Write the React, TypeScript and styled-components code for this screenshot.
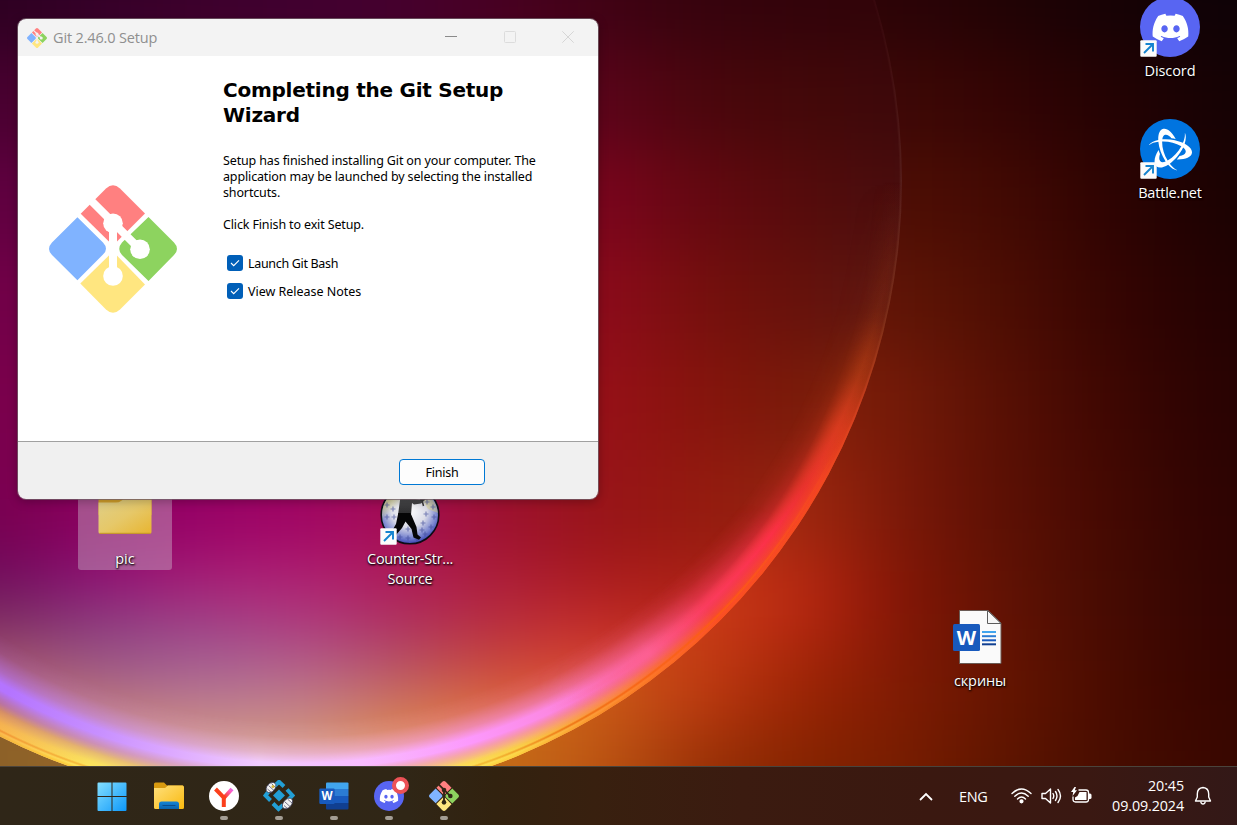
import React from 'react';
import styled, { createGlobalStyle } from 'styled-components';
import { FaDiscord } from 'react-icons/fa';
import { SiBattledotnet } from 'react-icons/si';

const GlobalStyle = createGlobalStyle`
  * { box-sizing: border-box; }
  body { margin: 0; overflow: hidden; background: #200; }
`;

const uiFont = `"Open Sans", "Noto Sans", sans-serif`;
const dialogFont = `"Noto Sans", "Open Sans", sans-serif`;

const Screen = styled.div`
  width: 1237px;
  height: 825px;
  display: flex;
  flex-direction: column;
  font-family: ${uiFont};
  overflow: hidden;
`;

const Desktop = styled.main`
  position: relative;
  flex: 1;
  overflow: hidden;
`;

/* ---------- wallpaper ---------- */

const Canvas = styled.svg`
  position: absolute;
  inset: 0;
  display: block;
`;

const Ring = styled.div<{ $colors: string; $mask: string; $cx: number; $cy: number }>`
  position: absolute;
  inset: 0;
  clip-path: circle(622px at 280px 181px);
  background: conic-gradient(from 90deg at 280px 181px, ${p => p.$colors});
  -webkit-mask-image: radial-gradient(circle at ${p => p.$cx}px ${p => p.$cy}px, ${p => p.$mask});
  mask-image: radial-gradient(circle at ${p => p.$cx}px ${p => p.$cy}px, ${p => p.$mask});
`;

type Row = { y: number; h: number; colors: string[] };

const insideRows: Row[] = [
  { y: -150, h: 200, colors: ['#2c0020', '#340028', '#3c002c', '#400030', '#44002e', '#480022', '#400214', '#36030d', '#32030a', '#300408'] },
  { y: 50, h: 100, colors: ['#480030', '#500030', '#500030', '#500030', '#500030', '#580424', '#5c041a', '#4a060c', '#440809', '#3c080a'] },
  { y: 150, h: 100, colors: ['#600040', '#600040', '#600040', '#600040', '#600040', '#780420', '#7c041e', '#640810', '#560b0b', '#480e0e'] },
  { y: 250, h: 100, colors: ['#720048', '#720048', '#720048', '#720048', '#720048', '#8a081e', '#8e0a1c', '#76100c', '#66110b', '#5a1812'] },
  { y: 350, h: 100, colors: ['#7a004c', '#7a004c', '#7a004c', '#800040', '#900030', '#960c20', '#981018', '#86140c', '#781a0a', '#802808'] },
  { y: 450, h: 100, colors: ['#78004e', '#8c0060', '#960066', '#a00464', '#a20c54', '#9c102e', '#981418', '#941a0e', '#902410', '#a03010'] },
  { y: 550, h: 50, colors: ['#6c0a5c', '#901078', '#aa1c74', '#b02074', '#b01c58', '#ac1c38', '#a81a1c', '#a82014', '#a02414', '#a03010'] },
  { y: 600, h: 50, colors: ['#7c3060', '#884080', '#9c4488', '#ac3c80', '#ac3060', '#b82e40', '#c42c28', '#b82618', '#b02818', '#b02818'] },
  { y: 650, h: 50, colors: ['#b06070', '#a05c88', '#a86898', '#b46a90', '#b85c68', '#d04c34', '#dc4c34', '#c03018', '#c03018', '#c03018'] },
  { y: 700, h: 40, colors: ['#c88070', '#cc8874', '#c88888', '#c88c84', '#dc8050', '#e47848', '#e46848', '#d04020', '#c03018', '#c03018'] },
  { y: 740, h: 160, colors: ['#dca088', '#dca088', '#dca488', '#dca488', '#e49450', '#e88850', '#e47050', '#d04020', '#c03018', '#c03018'] },
];

const outsideRows: Row[] = [
  { y: -150, h: 200, colors: ['#300408', '#300408', '#300408', '#300408', '#300408', '#300408', '#300408', '#300408', '#2e0408', '#2c0306', '#210305', '#170205', '#100206', '#0c0206'] },
  { y: 50, h: 100, colors: ['#400806', '#400806', '#400806', '#400806', '#400806', '#400806', '#400806', '#400806', '#400806', '#3e0806', '#340404', '#250203', '#180204', '#100204'] },
  { y: 150, h: 100, colors: ['#500c04', '#500c04', '#500c04', '#500c04', '#500c04', '#500c04', '#500c04', '#500c04', '#500c04', '#4e0e05', '#440a03', '#300302', '#1e0202', '#160202'] },
  { y: 250, h: 100, colors: ['#601408', '#601408', '#601408', '#601408', '#601408', '#601408', '#601408', '#601408', '#681608', '#601506', '#4e0e03', '#380502', '#260202', '#1c0202'] },
  { y: 350, h: 100, colors: ['#701c0a', '#701c0a', '#701c0a', '#701c0a', '#701c0a', '#701c0a', '#701c0a', '#701c0a', '#84200a', '#741a08', '#581004', '#400702', '#2c0302', '#220202'] },
  { y: 450, h: 100, colors: ['#902410', '#902410', '#902410', '#902410', '#902410', '#902410', '#902410', '#a02c12', '#a0280f', '#7a1808', '#5c1004', '#460902', '#300402', '#280202'] },
  { y: 550, h: 100, colors: ['#c04018', '#c04018', '#c04018', '#c04018', '#c04018', '#c04018', '#c84818', '#cc3c18', '#ba2812', '#821505', '#621304', '#480b02', '#340502', '#2c0302'] },
  { y: 650, h: 80, colors: ['#906028', '#906028', '#b07020', '#b07020', '#b07020', '#d07018', '#cc5c18', '#c03a12', '#9c2404', '#801b04', '#661500', '#4c0c00', '#380500', '#300400'] },
  { y: 730, h: 200, colors: ['#8a6028', '#986828', '#b07020', '#b07020', '#b87018', '#c46c18', '#bc5412', '#983006', '#842400', '#781d00', '#5e1500', '#480d00', '#3c0800', '#340600'] },
];

/** Paints rows of 100px wide swatches; a blur filter melts them together. */
const Swatches = ({ rows }: { rows: Row[] }) => (
  <g>
    {rows.map(row =>
      row.colors.map((c, i) => {
        const x = i === 0 ? -250 : i * 100 - 50;
        const last = i === row.colors.length - 1;
        return <rect key={`${row.y}-${i}`} x={x} y={row.y} width={i === 0 ? 301 : last ? 350 : 101} height={row.h + 1} fill={c} />;
      }),
    )}
  </g>
);

const wideRing =
  'transparent 0deg, rgba(240,60,90,0) 34deg, rgba(244,64,100,.45) 45deg, rgba(250,100,160,.85) 53deg, #fc84dc 61deg, #fc98fc 71deg, #f8bcff 82deg, #f2ccff 92deg, #dca8ff 101deg, #c890ff 108deg, #b474ff 118deg, #b070ff 180deg, transparent 181deg, transparent 360deg';
const narrowRing =
  'rgba(130,50,20,0) 0deg, rgba(150,54,20,.22) 13deg, rgba(184,64,22,.45) 18deg, rgba(224,60,34,.65) 24deg, rgba(236,48,48,.8) 30deg, #fc3048 36deg, #fa3c5e 45deg, rgba(255,96,150,.8) 52deg, rgba(255,120,200,0) 63deg, transparent 360deg';
const outerRing =
  'rgba(120,60,40,0) 0deg, rgba(150,60,20,.15) 12deg, rgba(200,64,24,.45) 19deg, rgba(240,68,32,.8) 24deg, #fa4824 29deg, #ff5222 45deg, #ff7828 53deg, #fda038 60deg, #fcd848 67deg, #ffee60 75deg, #fff080 92deg, #ffec58 108deg, #fdc04c 116deg, #f8a040 122deg, transparent 181deg, transparent 360deg';
const hairLine =
  'rgba(120,70,60,.3) 0deg, rgba(150,70,40,.4) 14deg, rgba(220,70,36,.6) 22deg, rgba(240,72,30,.8) 30deg, #fa5020 45deg, #f88828 58deg, #fcd040 68deg, #ffe850 90deg, #fcc83c 112deg, #f0a840 120deg, transparent 181deg, transparent 330deg, rgba(120,60,60,.1) 345deg, rgba(120,70,60,.3) 360deg';
const seamLine =
  'transparent 0deg, rgba(255,90,20,0) 25deg, rgba(255,96,16,.6) 42deg, rgba(246,96,16,.75) 55deg, rgba(236,110,16,.8) 62deg, rgba(240,170,40,.7) 70deg, rgba(245,190,50,.7) 105deg, rgba(240,140,50,.75) 118deg, transparent 140deg';

const Wallpaper = () => (
  <>
    <Canvas width="1237" height="766" viewBox="0 0 1237 766">
      <defs>
        <filter id="melt" filterUnits="userSpaceOnUse" x="-240" y="-140" width="1720" height="1040" colorInterpolationFilters="sRGB">
          <feGaussianBlur stdDeviation="48 32" />
        </filter>
        <clipPath id="disc">
          <circle cx="280" cy="181" r="622" />
        </clipPath>
      </defs>
      <g filter="url(#melt)">
        <Swatches rows={outsideRows} />
      </g>
      <g clipPath="url(#disc)">
        <g filter="url(#melt)">
          <Swatches rows={insideRows} />
        </g>
      </g>
    </Canvas>
    <Ring $cx={280} $cy={181} $colors={outerRing} $mask="transparent 592px, rgba(0,0,0,.85) 610px, #000 622px" />
    <Ring $cx={298} $cy={169} $colors={wideRing} $mask="transparent 552px, rgba(0,0,0,.12) 568px, rgba(0,0,0,.55) 584px, #000 594px, #000 600px, rgba(0,0,0,.5) 608px, transparent 618px" />
    <Ring $cx={298} $cy={169} $colors={narrowRing} $mask="transparent 556px, rgba(0,0,0,.14) 572px, rgba(0,0,0,.45) 586px, #000 598px, rgba(0,0,0,.6) 604px, transparent 612px" />
    <Ring $cx={280} $cy={181} $colors={seamLine} $mask="transparent 615px, #000 616.5px, #000 617px, transparent 618.5px" />
    <Ring $cx={280} $cy={181} $colors={hairLine} $mask="transparent 619px, #000 621px" />
  </>
);

/* ---------- icons ---------- */

const GitLogo = ({ size, line }: { size: number; line: string }) => (
  <svg width={size} height={size} viewBox="0 0 128 128">
    <path fill="#ff8080" d="M31.7 28.7 57 3.6Q64-3 71 3.6L96 28.4 64 60.5Z" />
    <path fill="#80b3ff" d="M28.4 32.2 54 57.6Q60 64 54 69.6L28.4 95.2 3 70Q-3 64 3 57.6Z" />
    <path fill="#8dd35f" d="M99.5 32 125 57.6Q131 64 125 70L99.5 96 73 70Q67.500 64 73 57.600Z" />
    <path fill="#ffe680" d="M64 66.500 96 99.500 71 124.400Q64 131 57 124.400L31.300 98.500Z" />
    <g stroke={line} strokeWidth="8" fill="none">
      <path d="M64 38V91M40 13.500 91 64.300" />
    </g>
    <g fill={line}>
      <circle cx="64" cy="38.300" r="9.800" />
      <circle cx="91" cy="64.300" r="9.800" />
      <circle cx="64" cy="91" r="9.800" />
    </g>
  </svg>
);

const WindowsLogo = () => (
  <svg width="30" height="30" viewBox="0 0 30 30">
    <defs>
      <linearGradient id="win" gradientUnits="userSpaceOnUse" x1="0" y1="0" x2="30" y2="30">
        <stop offset="0" stopColor="#86e0ff" />
        <stop offset="1" stopColor="#0a96fa" />
      </linearGradient>
    </defs>
    <path fill="url(#win)" d="M1.500.5H14.500V14H.5V1.500Q.5.5 1.500.5ZM15.500.5H28.500Q29.500.5 29.500 1.500V14H15.500ZM.5 15H14.500V29H1.500Q.5 29 .5 28ZM15.500 15H29.500V28Q29.500 29 28.500 29H15.500Z" />
  </svg>
);

const ExplorerIcon = () => (
  <svg width="30" height="28" viewBox="0 0 30 28">
    <defs>
      <linearGradient id="fold" x1="0" y1="0" x2="1" y2="1">
        <stop offset="0" stopColor="#ffe07c" />
        <stop offset="1" stopColor="#f9b90f" />
      </linearGradient>
      <linearGradient id="tray" x1="0" y1="0" x2="0" y2="1">
        <stop offset="0" stopColor="#1584d4" />
        <stop offset="1" stopColor="#0a63ad" />
      </linearGradient>
    </defs>
    <path fill="#d89a10" d="M0 2Q0 .5 1.500.5H10L13 3.500H29V12H0Z" />
    <path fill="url(#fold)" d="M0 6H11L14 3.500H28.500Q30 3.500 30 5V25.500Q30 27 28.500 27H1.500Q0 27 0 25.500Z" />
    <path fill="url(#tray)" d="M5 27V22Q5 19.500 7.500 19.500H22.500Q25 19.500 25 22V27Z" />
    <path stroke="#0a4c8c" strokeWidth="1.200" strokeLinecap="round" d="M9 23.500H21" />
  </svg>
);

const YandexIcon = () => (
  <svg width="30" height="30" viewBox="0 0 30 30" fill="none">
    <defs>
      <linearGradient id="ya" gradientUnits="userSpaceOnUse" x1="13" y1="18" x2="25" y2="8">
        <stop offset=".2" stopColor="#fb3f1c" />
        <stop offset=".75" stopColor="#ff5fc8" />
        <stop offset="1" stopColor="#c86cf0" />
      </linearGradient>
    </defs>
    <circle cx="15" cy="15" r="15" fill="#fff" />
    <path stroke="url(#ya)" strokeWidth="4" d="M14.800 17 23 8" />
    <path stroke="#fb3f1c" strokeWidth="4" d="M6.500 8 14.800 16.500V26" />
  </svg>
);

const NetworkIcon = () => (
  <svg width="32" height="32" viewBox="0 0 32 32" fill="none">
    <path fill="#229fd6" d="M16 9.500 22 15.500 16 21.500 10 15.500Z" />
    <g stroke="#229fd6" strokeWidth="4">
      <path d="M11 6.500 16 1.800 21 6.500" />
      <path d="M24 9.500 29.500 15.500 25 20" />
      <path d="M6 11 2.500 15.500 7.500 20.500" />
      <path d="M10 23.500 15.500 29 20 25" />
    </g>
    <g stroke="#3b3a58" strokeWidth=".7" fill="#f2f2f2">
      <ellipse cx="8" cy="7.500" rx="5.800" ry="4" transform="rotate(-48 8 7.500)" />
      <ellipse cx="24.500" cy="23.500" rx="6.200" ry="4" transform="rotate(-48 24.500 23.500)" />
      <path d="M4.500 9 9 13M5.500 5.500 11 10.500M8.500 3.500 12 7M21 25.500 25 29M22 22 27.500 27M25 19.500 29 23" />
    </g>
    <circle cx="10" cy="6.500" r="1.500" fill="#d8b83c" />
  </svg>
);

const WordTile = () => (
  <svg width="30" height="28" viewBox="0 0 30 28">
    <path fill="#41a5ee" d="M7 1.500Q7 .5 8 .5H28.500Q29.500.5 29.500 1.500V7H7Z" />
    <path fill="#2b7cd3" d="M7 7H29.500V14H7Z" />
    <path fill="#185abd" d="M7 14H29.500V21H7Z" />
    <path fill="#103f91" d="M7 21H29.500V26.500Q29.500 27.500 28.500 27.500H8Q7 27.500 7 26.500Z" />
    <rect x=".3" y="6.500" width="15.400" height="15.500" rx="1.200" fill="#185abd" />
    <text x="8" y="18.200" textAnchor="middle" fontFamily="Open Sans, sans-serif" fontWeight="700" fontSize="11.500" fill="#fff">W</text>
  </svg>
);

const WordDocument = () => (
  <svg width="54" height="56" viewBox="0 0 54 56">
    <path fill="#fafafa" stroke="#6a5a54" strokeWidth="1" d="M6.500 1.500H35L48 14V54.500H6.500Z" />
    <path fill="#f6f6f6" stroke="#5c5c5c" strokeWidth="1" d="M34.500 1.500V14.500H48Z" />
    <g strokeWidth="2">
      <path stroke="#41a5ee" d="M29 23H43" />
      <path stroke="#2b7cd3" d="M29 27.200H43" />
      <path stroke="#185abd" d="M29 31.300H43" />
      <path stroke="#103f91" d="M29 35.300H43" />
    </g>
    <rect x="0" y="15" width="27" height="27" rx="1.500" fill="#185abd" />
    <text x="13.500" y="36" textAnchor="middle" fontFamily="Open Sans, sans-serif" fontWeight="700" fontSize="20" fill="#fff">W</text>
  </svg>
);

const PicFolder = () => (
  <svg width="54" height="50" viewBox="0 0 54 50">
    <defs>
      <linearGradient id="pf" x1="0" y1="0" x2="1" y2="1">
        <stop offset="0" stopColor="#dfcf88" />
        <stop offset=".5" stopColor="#e6c869" />
        <stop offset="1" stopColor="#e8b530" />
      </linearGradient>
    </defs>
    <path fill="#d3a02a" d="M.5 10H53.500V30H.5Z" />
    <path fill="url(#pf)" d="M.5 17.500H18Q21 17.500 23 16L25 14.500H53.500V47Q53.500 48.500 52 48.500H2Q.5 48.500.5 47Z" />
    <path stroke="#c99b1e" d="M1.500 48.300H52.500" />
  </svg>
);

const plus: [number, number][] = [
  [7, 20], [7, 32], [13, 24], [20, 52], [28, 53], [37, 54], [45, 49], [51, 42], [54, 32], [53, 22], [43, 38], [28, 44], [46, 29], [14, 32], [47, 17], [42, 45],
];

const CounterStrikeIcon = () => (
  <svg width="60" height="60" viewBox="0 0 60 60">
    <defs>
      <radialGradient id="cs" cx=".48" cy=".4" r=".62">
        <stop offset="0" stopColor="#ffffff" />
        <stop offset=".5" stopColor="#dcdde8" />
        <stop offset=".8" stopColor="#7a86d0" />
        <stop offset="1" stopColor="#2c38ac" />
      </radialGradient>
      <linearGradient id="csy" x1="0" y1="0" x2=".5" y2=".6">
        <stop offset=".3" stopColor="#e2d86c" />
        <stop offset="1" stopColor="#e2d86c" stopOpacity="0" />
      </linearGradient>
      <linearGradient id="csb" x1="0" y1="0" x2="0" y2="1">
        <stop offset="0" stopColor="#58585a" />
        <stop offset="1" stopColor="#2a2a2c" />
      </linearGradient>
    </defs>
    <circle cx="30" cy="30" r="28.800" fill="url(#cs)" stroke="#0c0c14" strokeWidth="1.600" />
    <path fill="url(#csy)" d="M2 30A28 28 0 0 1 30 2V34L2 36Z" />
    <path fill="#e2d86c" opacity=".4" d="M44 8Q56 14 58 28L48 24 42 14Z" />
    <g stroke="#3c4898" strokeWidth="1.200" opacity=".6">
      {plus.map(([x, y]) => <path key={`${x}-${y}`} d={`M${x - 2.500} ${y}H${x + 2.500}M${x} ${y - 2.500}V${y + 2.500}`} />)}
    </g>
    <path fill="url(#csb)" d="M21 8H33L35 14 40 14.500 44 12 45 15 41 18.500 34 19.500 32 18 31 30H18Z" />
    <path stroke="#3a3a3a" strokeWidth="1.500" d="M40 15 49 13M42 15 43.500 21" />
    <path fill="#050506" d="M18.300 28H30.500L33.500 35 36.500 42 37.500 49.500 41 52.500 39 54.800 33.500 52.500 31.500 44 25.500 36.500 22 43 16 50 12 46 16 39Z" />
  </svg>
);

const ShortcutArrow = () => (
  <svg width="17" height="17" viewBox="0 0 17 17">
    <rect x=".3" y=".3" width="16.400" height="16.400" rx="1" fill="#fbfbfb" />
    <path d="M4 13 12.500 4.500M5.500 4H13V11.500" fill="none" stroke="#1583cf" strokeWidth="1.900" />
  </svg>
);

/* ---------- desktop items ---------- */

const Item = styled.div<{ $x: number; $y: number; $selected?: boolean }>`
  position: absolute;
  left: ${p => p.$x}px;
  top: ${p => p.$y}px;
  width: 94px;
  display: flex;
  flex-direction: column;
  align-items: center;
  padding: 0 0 1px;
  border-radius: 3px;
  background: ${p => (p.$selected ? 'rgba(205,185,205,.42)' : 'transparent')};
`;

const Glyph = styled.div<{ $h?: number }>`
  position: relative;
  width: 60px;
  height: ${p => p.$h ?? 60}px;
  display: flex;
  align-items: flex-end;
  justify-content: center;
`;

const Disc = styled.div<{ $color: string; $size: number }>`
  width: ${p => p.$size}px;
  height: ${p => p.$size}px;
  border-radius: 50%;
  display: flex;
  align-items: center;
  justify-content: center;
  color: #fff;
  background: ${p => p.$color};
`;

const Shortcut = styled.span`
  position: absolute;
  left: 0;
  bottom: 0;
  display: flex;
`;

const Label = styled.span<{ $gap: number; $spacing?: number }>`
  margin-top: ${p => p.$gap}px;
  font-size: 14.500px;
  line-height: 20px;
  letter-spacing: ${p => p.$spacing ?? 0}px;
  text-align: center;
  white-space: pre;
  color: #fff;
  text-shadow: 0 1px 2px #000, 1px 1px 2px rgba(0, 0, 0, 0.8);
`;

/* ---------- installer window ---------- */

const Window = styled.section`
  position: absolute;
  left: 17px;
  top: 18px;
  width: 582px;
  height: 482px;
  border: 1px solid rgba(110, 90, 100, 0.8);
  border-radius: 9px;
  background-clip: padding-box;
  overflow: hidden;
  display: flex;
  flex-direction: column;
  box-shadow: 0 2px 10px rgba(0, 0, 0, 0.25);
`;

const TitleBar = styled.header`
  height: 37px;
  display: flex;
  align-items: center;
  padding-left: 9px;
  background: #f3f3f3;
`;

const TitleText = styled.h1`
  flex: 1;
  margin: 0 0 0 6px;
  font-size: 14.500px;
  font-weight: 400;
  letter-spacing: -0.15px;
  color: #8f8f8f;
`;

const Controls = styled.div`
  display: flex;
  align-items: center;
  gap: 46.500px;
  padding: 0 24px 1px 0;
`;

const Body = styled.div`
  height: 385px;
  display: flex;
  background: #fff;
`;

const Side = styled.aside`
  width: 205px;
  padding: 129px 0 0 31px;
`;

const Copy = styled.div`
  flex: 1;
  padding-top: 22px;
  color: #000;
  font-family: ${dialogFont};
  font-size: 12.500px;
  letter-spacing: -0.14px;
  line-height: 16px;
`;

const Heading = styled.h2`
  margin: 0 0 25px;
  font-family: "DejaVu Sans", sans-serif;
  font-size: 20px;
  font-weight: 700;
  letter-spacing: -0.25px;
  line-height: 25px;
  white-space: pre;
`;

const Para = styled.p`
  margin: 0 0 16px;
  white-space: pre;
`;

const CheckRow = styled.label<{ $spacing: number }>`
  height: 28px;
  display: flex;
  align-items: center;
  gap: 5px;
  padding-left: 4px;
  letter-spacing: ${p => p.$spacing}px;
`;

const CheckText = styled.span`
  padding-top: 2px;
`;

const Tick = styled.span`
  width: 16px;
  height: 16px;
  border-radius: 3px;
  background: #005fb8;
  display: flex;
  align-items: center;
  justify-content: center;
`;

const Footer = styled.footer`
  flex: 1;
  border-top: 1px solid #a0a0a0;
  background: #f0f0f0;
  padding: 17px 0 0 381px;
`;

const FinishButton = styled.button`
  width: 86px;
  height: 26px;
  padding: 0;
  border: 1px solid #0078d4;
  border-radius: 4px;
  background: #fdfdfd;
  color: #000;
  font-family: ${dialogFont};
  font-size: 12.500px;
  letter-spacing: -0.2px;
`;

const Checkbox = ({ text, spacing }: { text: string; spacing: number }) => (
  <CheckRow $spacing={spacing}>
    <Tick>
      <svg width="10" height="8" viewBox="0 0 10 8">
        <path d="M1 4 3.700 6.700 9 1.300" fill="none" stroke="#fff" strokeWidth="1.100" />
      </svg>
    </Tick>
    <CheckText>{text}</CheckText>
  </CheckRow>
);

/* ---------- taskbar ---------- */

const Taskbar = styled.nav`
  position: relative;
  height: 59px;
  border-top: 1px solid #4a443c;
  background: linear-gradient(90deg, #2f2618 0, #302616 33%, #32220f 40%, #38200f 48%, #3b1b10 60%, #3a1810 75%, #3a1812 88%, #331817 100%);
  display: flex;
  justify-content: space-between;
`;

const Apps = styled.div`
  display: flex;
  padding-left: 86px;
`;

const AppButton = styled.div<{ $open?: boolean }>`
  position: relative;
  width: 55px;
  display: flex;
  align-items: center;
  justify-content: center;
  padding-left: 1px;
  &::after {
    content: '';
    display: ${p => (p.$open ? 'block' : 'none')};
    position: absolute;
    bottom: 5px;
    left: 24px;
    width: 8px;
    height: 4px;
    border-radius: 2px;
    background: #a39d94;
  }
`;

const StartSlot = styled.span`
  display: flex;
  margin: 1px 4px 0 0;
`;

const LiveBadge = styled.span`
  position: absolute;
  left: 31px;
  top: 10px;
  width: 17px;
  height: 17px;
  border-radius: 50%;
  border: 4.500px solid #ec5257;
  background: #fff;
`;

const Tray = styled.div`
  display: flex;
  align-items: center;
  padding-right: 25px;
  color: #fff;
`;

const Lang = styled.span`
  width: 30px;
  margin: 1px 22px 0 26px;
  font-size: 14.500px;
  letter-spacing: -0.3px;
`;

const Status = styled.div`
  display: flex;
  align-items: center;
  gap: 9px;
`;

const Clock = styled.div`
  width: 92px;
  margin-right: 10px;
  text-align: right;
  font-size: 14.300px;
  line-height: 20px;
  letter-spacing: -0.1px;
`;

export default function App() {
  return (
    <Screen>
      <GlobalStyle />
      <Desktop>
        <Wallpaper />

        <Item $x={78} $y={485} $selected>
          <Glyph $h={50}><PicFolder /></Glyph>
          <Label $gap={14}>pic</Label>
        </Item>
        <Item $x={363} $y={485}>
          <Glyph><CounterStrikeIcon /><Shortcut><ShortcutArrow /></Shortcut></Glyph>
          <Label $gap={4} $spacing={-0.3}>{'Counter-Str...\nSource'}</Label>
        </Item>
        <Item $x={1123} $y={-3}>
          <Glyph><Disc $color="#5865f2" $size={60}><FaDiscord size={39} /></Disc><Shortcut><ShortcutArrow /></Shortcut></Glyph>
          <Label $gap={4} $spacing={-0.1}>Discord</Label>
        </Item>
        <Item $x={1123} $y={119}>
          <Glyph><Disc $color="#0074e0" $size={60}><SiBattledotnet size={43} /></Disc><Shortcut><ShortcutArrow /></Shortcut></Glyph>
          <Label $gap={4} $spacing={-0.2}>Battle.net</Label>
        </Item>
        <Item $x={933} $y={609}>
          <Glyph $h={56}><WordDocument /></Glyph>
          <Label $gap={6} $spacing={-0.1}>скрины</Label>
        </Item>

        <Window>
          <TitleBar>
            <GitLogo size={20} line="#f3f3f3" />
            <TitleText>Git 2.46.0 Setup</TitleText>
            <Controls>
              <svg width="12" height="12" viewBox="0 0 12 12"><path d="M0 5.500H12" stroke="#8a8a8a" /></svg>
              <svg width="12" height="12" viewBox="0 0 12 12"><rect x=".5" y=".5" width="11" height="11" rx="1" fill="none" stroke="#dcdcdc" /></svg>
              <svg width="12" height="12" viewBox="0 0 12 12"><path d="M.3.3 11.700 11.700M11.700.3.3 11.700" stroke="#d6d6d6" /></svg>
            </Controls>
          </TitleBar>
          <Body>
            <Side><GitLogo size={128} line="#ffffff" /></Side>
            <Copy>
              <Heading>{'Completing the Git Setup\nWizard'}</Heading>
              <Para>{'Setup has finished installing Git on your computer. The\napplication may be launched by selecting the installed\nshortcuts.'}</Para>
              <Para>Click Finish to exit Setup.</Para>
              <Checkbox text="Launch Git Bash" spacing={-0.32} />
              <Checkbox text="View Release Notes" spacing={-0.02} />
            </Copy>
          </Body>
          <Footer><FinishButton>Finish</FinishButton></Footer>
        </Window>
      </Desktop>

      <Taskbar>
        <Apps>
          <AppButton><StartSlot><WindowsLogo /></StartSlot></AppButton>
          <AppButton><ExplorerIcon /></AppButton>
          <AppButton $open><YandexIcon /></AppButton>
          <AppButton $open><NetworkIcon /></AppButton>
          <AppButton $open><WordTile /></AppButton>
          <AppButton $open><Disc $color="#5865f2" $size={30}><FaDiscord size={20} /></Disc><LiveBadge /></AppButton>
          <AppButton $open><GitLogo size={30} line="#302616" /></AppButton>
        </Apps>
        <Tray>
          <svg width="14" height="9" viewBox="0 0 14 9"><path d="M1 8 7 2 13 8" fill="none" stroke="#fff" strokeWidth="1.800" /></svg>
          <Lang>ENG</Lang>
          <Status>
            <svg width="21" height="18" viewBox="0 0 21 18" fill="none" stroke="#fff" strokeWidth="1.400" strokeLinecap="round">
              <path d="M1 6.500Q10.500-2.500 20 6.500M3.800 9.300Q10.500 2.800 17.200 9.300M6.500 12Q10.500 8 14.500 12" />
              <circle cx="10.500" cy="14.300" r="1.400" fill="#fff" />
            </svg>
            <svg width="21" height="18" viewBox="0 0 21 18" fill="none" stroke="#fff" strokeWidth="1.400" strokeLinejoin="round" strokeLinecap="round">
              <path d="M1 6.500H4.500L9.500 2V16L4.500 11.500H1Z" />
              <path d="M12 6.500Q13.500 9 12 11.500M14.500 4.500Q17.500 9 14.500 13.500M17 2.500Q22 9 17 15.500" />
            </svg>
            <svg width="21" height="18" viewBox="0 0 21 18" fill="none" stroke="#fff" strokeWidth="1.300">
              <path d="M7.500 3H15Q17.500 3 17.500 5.500V12.500Q17.500 15 15 15H4.500Q2 15 2 12.500V9.500" />
              <path d="M8.500 5H15.500V13H4V10.500L6.500 9Z" fill="#fff" stroke="none" />
              <path d="M18 6.500H19Q20.500 6.500 20.500 8V10.500Q20.500 12 19 12H18Z" fill="#fff" stroke="none" />
              <path d="M3.500 0 0 5H2.200L1.500 9 6 3.300H3.800L5 0Z" fill="#fff" stroke="none" />
            </svg>
          </Status>
          <Clock>20:45<br />09.09.2024</Clock>
          <svg width="18" height="20" viewBox="0 0 18 20" fill="none" stroke="#fff" strokeWidth="1.400" strokeLinejoin="round">
            <path d="M9 1.500Q3.300 2 3.300 8V11L1.500 15H16.500L14.700 11V8Q14.700 2 9 1.500Z" />
            <path d="M6.800 15.500Q7 18 9 18T11.200 15.500" />
          </svg>
        </Tray>
      </Taskbar>
    </Screen>
  );
}
